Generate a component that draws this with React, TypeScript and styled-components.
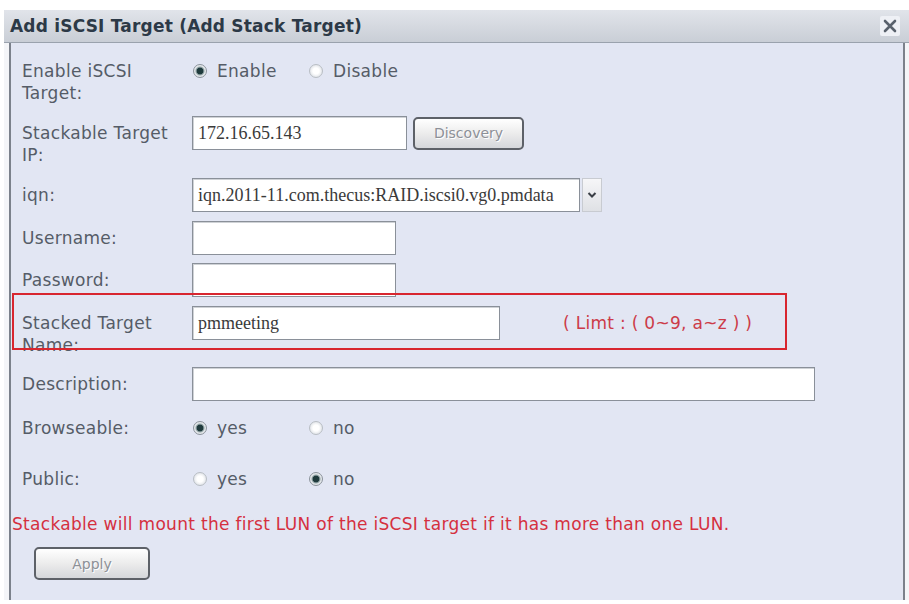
import React from 'react'
import styled, { createGlobalStyle } from 'styled-components'

const GlobalStyle = createGlobalStyle`
  html, body {
    margin: 0;
    padding: 0;
    background: #ffffff;
  }
  body {
    font-family: "DejaVu Sans", Verdana, sans-serif;
    overflow: hidden;
  }
`

const Dialog = styled.div`
  margin: 10px 0 0 4px;
  width: 905px;
  height: 590px;
  display: flex;
  flex-direction: column;
  background: #f4f5f8;
`

const TitleBar = styled.div`
  height: 32px;
  flex: none;
  display: flex;
  align-items: center;
  justify-content: space-between;
  padding: 0 9px 0 6px;
  background: linear-gradient(#e1e4ea, #c9ced6);
  border-bottom: 1px solid #9aa2ad;
`

const Title = styled.span`
  font-size: 17px;
  font-weight: bold;
  letter-spacing: 0.2px;
  color: #2c3947;
`

const CloseBox = styled.span`
  width: 20px;
  height: 20px;
  display: flex;
  align-items: center;
  justify-content: center;
  background: #eef0f5;
  border-radius: 2px;
`

const Panel = styled.div`
  flex: 1;
  margin: 0 4px 0 5px;
  padding-top: 11px;
  background: #e2e6f3;
  border-left: 2px solid #7b818b;
  border-right: 2px solid #7b818b;
`

const Row = styled.div<{ $h: number }>`
  position: relative;
  height: ${({ $h }) => $h}px;
  padding-left: 11px;
  display: grid;
  grid-template-columns: 170px 1fr;
  align-items: start;
`

const Highlight = styled.div`
  position: absolute;
  left: 1px;
  top: -13px;
  width: 771px;
  height: 53px;
  border: 2px solid #d8262f;
  pointer-events: none;
`

const Label = styled.div`
  padding-top: 6px;
  font-size: 17px;
  letter-spacing: 0.3px;
  line-height: 22px;
  color: #555c67;
`

const Controls = styled.div`
  min-height: 34px;
  display: flex;
  align-items: center;
`

const TextBox = styled.div<{ $w: number }>`
  box-sizing: border-box;
  width: ${({ $w }) => $w}px;
  height: 34px;
  padding: 0 5px;
  display: flex;
  align-items: center;
  background: #ffffff;
  border: 1px solid #8a9099;
  box-shadow: inset 1px 1px 0 #cfd2d6;
  font-family: "Liberation Serif", "Times New Roman", serif;
  font-size: 18px;
  color: #3a3a3a;
  white-space: nowrap;
  overflow: hidden;
`

const SelectArrow = styled.span`
  width: 18px;
  height: 32px;
  margin-left: 2px;
  display: flex;
  align-items: center;
  justify-content: center;
  background: linear-gradient(#f6f6f8, #dfe1e5);
  border: 1px solid #c8cbd1;
`

const GlassButton = styled.span<{ $w: number }>`
  box-sizing: border-box;
  width: ${({ $w }) => $w}px;
  height: 33px;
  display: inline-flex;
  align-items: center;
  justify-content: center;
  border: 2px solid #5d6168;
  border-radius: 5px;
  background: linear-gradient(#ffffff, #ececec 50%, #d5d7db);
  font-size: 14px;
  color: #8d9097;
  text-shadow: 1px 1px 0 #ffffff;
`

const Option = styled.label<{ $w: number }>`
  width: ${({ $w }) => $w}px;
  display: flex;
  align-items: center;
  gap: 10px;
  font-size: 17px;
  letter-spacing: 0.3px;
  color: #555c67;
`

const Radio = styled.span<{ $on?: boolean }>`
  box-sizing: border-box;
  width: 14px;
  height: 14px;
  margin-left: 1px;
  border-radius: 50%;
  border: 1px solid ${({ $on }) => ($on ? '#8b939b' : '#b9bec4')};
  background: ${({ $on }) =>
    $on
      ? 'radial-gradient(circle, #1f3a3c 0 3px, #6f8587 3.5px, #e3e7ea 5px)'
      : 'radial-gradient(circle, #ffffff 0 3px, #e4e7eb 6px)'};
`

const Hint = styled.span`
  margin-left: 63px;
  font-size: 17px;
  letter-spacing: 0.3px;
  color: #cc3b48;
  white-space: nowrap;
`

const Note = styled.div`
  height: 34px;
  padding-left: 1px;
  font-size: 17px;
  letter-spacing: 0.3px;
  line-height: 22px;
  color: #d5303f;
  white-space: nowrap;
`

const ButtonRow = styled.div`
  padding-left: 23px;
`

function RadioPair(props: { a: string; b: string; first: boolean; w: number }) {
  return (
    <Controls>
      <Option $w={props.w}>
        <Radio $on={props.first} />
        {props.a}
      </Option>
      <Option $w={120}>
        <Radio $on={!props.first} />
        {props.b}
      </Option>
    </Controls>
  )
}

export default function App() {
  return (
    <>
      <GlobalStyle />
      <Dialog>
        <TitleBar>
          <Title>Add iSCSI Target (Add Stack Target)</Title>
          <CloseBox>
            <svg width="14" height="14" viewBox="0 0 14 14">
              <path d="M2 2 L12 12 M12 2 L2 12" stroke="#59616c" strokeWidth="2.6" strokeLinecap="round" />
            </svg>
          </CloseBox>
        </TitleBar>
        <Panel>
          <Row $h={62}>
            <Label>
              Enable iSCSI
              <br />
              Target:
            </Label>
            <RadioPair a="Enable" b="Disable" first w={116} />
          </Row>
          <Row $h={62}>
            <Label>
              Stackable Target
              <br />
              IP:
            </Label>
            <Controls>
              <TextBox $w={215}>172.16.65.143</TextBox>
              <span style={{ width: 6 }} />
              <GlassButton $w={111}>Discovery</GlassButton>
            </Controls>
          </Row>
          <Row $h={43}>
            <Label>iqn:</Label>
            <Controls>
              <TextBox $w={388}>iqn.2011-11.com.thecus:RAID.iscsi0.vg0.pmdata</TextBox>
              <SelectArrow>
                <svg width="10" height="8" viewBox="0 0 10 8">
                  <path d="M1.5 2 L5 5.5 L8.5 2" stroke="#3a3f46" strokeWidth="2" fill="none" />
                </svg>
              </SelectArrow>
            </Controls>
          </Row>
          <Row $h={42}>
            <Label>Username:</Label>
            <Controls>
              <TextBox $w={204} />
            </Controls>
          </Row>
          <Row $h={43}>
            <Label>Password:</Label>
            <Controls>
              <TextBox $w={204} />
            </Controls>
          </Row>
          <Row $h={61}>
            <Highlight />
            <Label>
              Stacked Target
              <br />
              Name:
            </Label>
            <Controls>
              <TextBox $w={308}>pmmeeting</TextBox>
              <Hint>( Limt : ( 0~9, a~z ) )</Hint>
            </Controls>
          </Row>
          <Row $h={44}>
            <Label>Description:</Label>
            <Controls>
              <TextBox $w={623} />
            </Controls>
          </Row>
          <Row $h={51}>
            <Label>Browseable:</Label>
            <RadioPair a="yes" b="no" first w={116} />
          </Row>
          <Row $h={51}>
            <Label>Public:</Label>
            <RadioPair a="yes" b="no" first={false} w={116} />
          </Row>
          <Note>Stackable will mount the first LUN of the iSCSI target if it has more than one LUN.</Note>
          <ButtonRow>
            <GlassButton $w={116}>Apply</GlassButton>
          </ButtonRow>
        </Panel>
      </Dialog>
    </>
  )
}
